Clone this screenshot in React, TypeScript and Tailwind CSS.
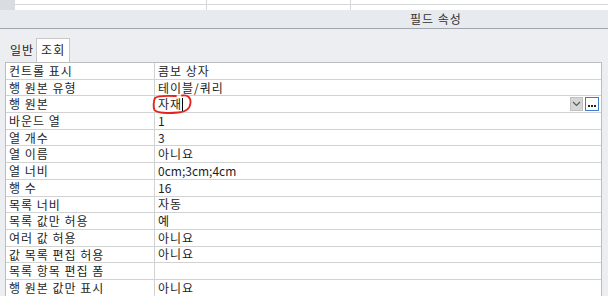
import React from 'react';

const rows: [string, string][] = [
  ['컨트롤 표시', '콤보 상자'],
  ['행 원본 유형', '테이블/쿼리'],
  ['행 원본', '자재'],
  ['바운드 열', '1'],
  ['열 개수', '3'],
  ['열 이름', '아니요'],
  ['열 너비', '0cm;3cm;4cm'],
  ['행 수', '16'],
  ['목록 너비', '자동'],
  ['목록 값만 허용', '예'],
  ['여러 값 허용', '아니요'],
  ['값 목록 편집 허용', '아니요'],
  ['목록 항목 편집 폼', ''],
  ['행 원본 값만 표시', '아니요'],
];

// hangul glyphs in the original font run a bit wider than latin ones
const spacingFor = (s: string) => (/[A-Za-z0-9]/.test(s) ? '' : 'tracking-[1px]');

const PropertyRow = ({ label, value, active }: { label: string; value: string; active: boolean }) => (
  <div className="flex h-[16.7px] border-b border-[#d2d2d2] leading-[16px]">
    <div className="w-[149px] shrink-0 border-r border-[#d2d2d2] pl-[3px] whitespace-nowrap tracking-[1px]">{label}</div>
    <div className="flex-1 flex items-center pl-[3px] relative">
      <span className={spacingFor(value)}>{value}</span>
      {active && (
        <>
          <span className="inline-block w-px h-[13px] bg-black" />
          <div className="ml-auto flex items-center gap-[2px] pr-[2px]">
            {/* dropdown arrow */}
            <div className="w-[13px] h-[14px] bg-[#d6d6d6] border border-[#c0c0c0] flex items-center justify-center">
              <svg width="9" height="6" viewBox="0 0 9 6">
                <path d="M1 1 L4.5 4.5 L8 1" fill="none" stroke="#555" strokeWidth="1.1" />
              </svg>
            </div>
            {/* builder button */}
            <div className="w-[14px] h-[14px] bg-white border border-[#3c7fd0] flex items-center justify-center gap-px pt-[3px]">
              <span className="w-[2px] h-[2px] bg-[#222]" />
              <span className="w-[2px] h-[2px] bg-[#222]" />
              <span className="w-[2px] h-[2px] bg-[#222]" />
            </div>
          </div>
          {/* hand-drawn red mark */}
          <svg className="absolute left-[-3px] top-[-3px] pointer-events-none" width="44" height="24" viewBox="0 0 44 24">
            <path
              d="M30 2.5 C36 1.5 39 5 38.5 10 C38 15 34 19 26 19.5 C16 20.5 5 20 2.5 17 C1 14 1.5 8 3 5 C5 3 14 2.5 24 3"
              fill="none"
              stroke="#e3231f"
              strokeWidth="1.8"
              strokeLinecap="round"
            />
          </svg>
        </>
      )}
    </div>
  </div>
);

export default function App() {
  return (
    <div
      className="w-[608px] h-[296px] overflow-hidden bg-[#eceef2] text-[12px] text-[#1e1e1e]"
      style={{ fontFamily: '"Noto Sans CJK KR", "Noto Sans", sans-serif' }}
    >
      {/* datasheet remnant */}
      <div className="flex h-[10px] bg-white">
        <div className="w-[15px] bg-[#d9dce1]" />
        <div className="w-[192px] border-r border-[#d6d6d6]">
          <div className="h-[5px] border-b border-[#d6d6d6]" />
        </div>
        <div className="w-[144px] border-r border-[#d6d6d6]">
          <div className="h-[5px] border-b border-[#d6d6d6]" />
        </div>
        <div className="flex-1">
          <div className="h-[5px] border-b border-[#d6d6d6]" />
        </div>
      </div>

      {/* header */}
      <div className="h-[19px] bg-[#e7eaef] border-b border-[#a2a7ae] pl-[410px] leading-[18px] tracking-[1px] text-[#333]">
        필드 속성
      </div>

      {/* tabs */}
      <div className="flex items-end h-[33px] pl-[8px] tracking-[1px]">
        <div className="px-[2px] h-[22px] leading-[20px]">일반</div>
        <div className="px-[4px] h-[24px] leading-[22px] bg-white border border-b-0 border-[#c8c8c8]">조회</div>
      </div>

      {/* property grid */}
      <div className="ml-[5px] w-[597px] bg-white border border-[#bdbdbd]">
        {rows.map(([label, value], i) => (
          <PropertyRow key={label} label={label} value={value} active={i === 2} />
        ))}
      </div>
    </div>
  );
}
